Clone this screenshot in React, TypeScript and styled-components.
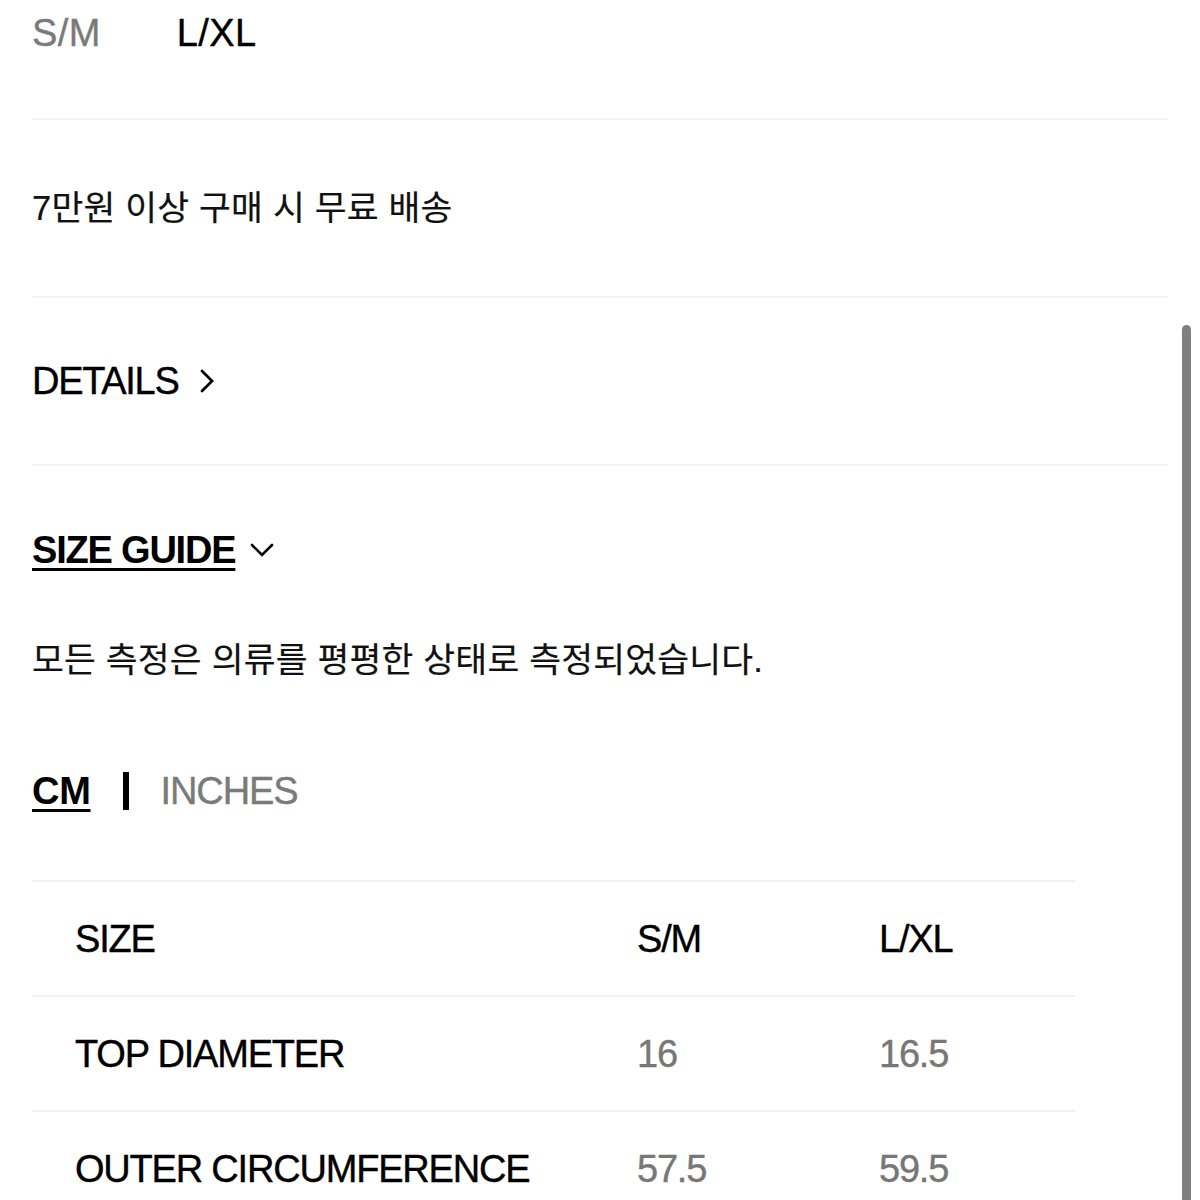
import React from "react";
import styled, { createGlobalStyle } from "styled-components";

const Global = createGlobalStyle`
  html, body { margin: 0; padding: 0; background: #fff; }
  body {
    font-family: "Liberation Sans", Arial, "Noto Sans CJK KR", sans-serif;
    color: #000;
    overflow: hidden;
  }
`;

const Page = styled.div`
  position: relative;
  width: 1200px;
  height: 1200px;
  overflow: hidden;
  background: #fff;
`;

const Content = styled.div`
  padding: 0 32px;
  display: flex;
  flex-direction: column;
`;

const Section = styled.section<{ $h: number }>`
  height: ${(p) => p.$h}px;
  border-bottom: 2px solid #f3f3f3;
  display: flex;
  align-items: center;
`;

const TopSection = styled.section`
  height: 118px;
  border-bottom: 2px solid #f3f3f3;
  display: flex;
  align-items: flex-start;
`;

const SizeOptions = styled.div`
  height: 65px;
  display: flex;
  align-items: center;
  gap: 76px;
`;

const SizeOption = styled.span<{ $active?: boolean }>`
  font-size: 38px;
  line-height: 40px;
  color: ${(p) => (p.$active ? "#000" : "#7a7a7a")};
  letter-spacing: 0.4px;
  -webkit-text-stroke: 0.4px ${(p) => (p.$active ? "#000" : "#7a7a7a")};
`;

const KoText = styled.p`
  margin: 0;
  font-family: "Liberation Sans", "Noto Sans CJK KR", sans-serif;
  font-size: 34.6px;
  line-height: 40px;
  color: #111;
  letter-spacing: 0.2px;
  -webkit-text-stroke: 0.2px #111;
`;

const Toggle = styled.div`
  display: flex;
  align-items: center;
  height: 40px;
`;

const Heading = styled.span<{ $bold?: boolean; $underline?: boolean }>`
  font-size: 38px;
  line-height: 40px;
  font-weight: ${(p) => (p.$bold ? 700 : 400)};
  letter-spacing: ${(p) => (p.$bold ? "-1.2px" : "-1.3px")};
  text-decoration: ${(p) => (p.$underline ? "underline" : "none")};
  text-decoration-thickness: 3px;
  text-underline-offset: 5px;
  -webkit-text-stroke: ${(p) => (p.$bold ? "0" : "0.4px")} #000;
`;

const GuideBlock = styled.div`
  display: flex;
  flex-direction: column;
  padding-top: 64px;
`;

const NoteRow = styled.div`
  margin-top: 70px;
  height: 40px;
  display: flex;
  align-items: center;
`;

const UnitRow = styled.div`
  margin-top: 91px;
  height: 40px;
  display: flex;
  align-items: center;
`;

const Unit = styled.span<{ $active?: boolean }>`
  font-size: 38px;
  line-height: 40px;
  font-weight: ${(p) => (p.$active ? 700 : 400)};
  color: ${(p) => (p.$active ? "#000" : "#7a7a7a")};
  letter-spacing: ${(p) => (p.$active ? "-0.3px" : "-1.1px")};
  text-decoration: ${(p) => (p.$active ? "underline" : "none")};
  text-decoration-thickness: 3px;
  text-underline-offset: 5px;
  -webkit-text-stroke: ${(p) => (p.$active ? "0" : "0.4px #7a7a7a")};
`;

const UnitBar = styled.span`
  display: inline-block;
  width: 6px;
  height: 38px;
  background: #000;
  margin: 0 32px 0 32px;
`;

const Table = styled.div`
  margin-top: 69px;
  width: 1043px;
  border-top: 2px solid #f1f1f1;
  display: flex;
  flex-direction: column;
`;

const Row = styled.div`
  height: 113px;
  display: grid;
  grid-template-columns: 562px 242px 1fr;
  align-items: center;
  border-bottom: 2px solid #f1f1f1;
  padding-left: 43px;
`;

const Cell = styled.span<{ $muted?: boolean }>`
  font-size: 38px;
  line-height: 40px;
  color: ${(p) => (p.$muted ? "#777" : "#000")};
  letter-spacing: -1.2px;
  white-space: nowrap;
  -webkit-text-stroke: 0.4px ${(p) => (p.$muted ? "#777" : "#000")};
`;

const Scrollbar = styled.div`
  position: absolute;
  right: 9px;
  top: 325px;
  width: 9px;
  height: 900px;
  border-radius: 5px;
  background: #808080;
`;

const ChevronRight = () => (
  <svg width="16" height="24" viewBox="0 0 16 24" style={{ marginLeft: 21 }}>
    <path d="M3 2 L13 12 L3 22" fill="none" stroke="#000" strokeWidth="2.8" strokeLinecap="round" strokeLinejoin="miter" />
  </svg>
);

const ChevronDown = () => (
  <svg width="24" height="16" viewBox="0 0 24 16" style={{ marginLeft: 15 }}>
    <path d="M2 3 L12 13 L22 3" fill="none" stroke="#000" strokeWidth="2.6" strokeLinecap="round" strokeLinejoin="miter" />
  </svg>
);

const rows = [
  { label: "TOP DIAMETER", a: "16", b: "16.5" },
  { label: "OUTER CIRCUMFERENCE", a: "57.5", b: "59.5" },
];

export default function App() {
  return (
    <Page>
      <Global />
      <Content>
        <TopSection>
          <SizeOptions>
            <SizeOption>S/M</SizeOption>
            <SizeOption $active>L/XL</SizeOption>
          </SizeOptions>
        </TopSection>
        <Section $h={176}>
          <KoText>7만원 이상 구매 시 무료 배송</KoText>
        </Section>
        <Section $h={166}>
          <Toggle>
            <Heading>DETAILS</Heading>
            <ChevronRight />
          </Toggle>
        </Section>
        <GuideBlock>
          <Toggle>
            <Heading $bold $underline>SIZE GUIDE</Heading>
            <ChevronDown />
          </Toggle>
          <NoteRow>
            <KoText>모든 측정은 의류를 평평한 상태로 측정되었습니다.</KoText>
          </NoteRow>
          <UnitRow>
            <Unit $active>CM</Unit>
            <UnitBar />
            <Unit>INCHES</Unit>
          </UnitRow>
          <Table>
            <Row>
              <Cell>SIZE</Cell>
              <Cell>S/M</Cell>
              <Cell>L/XL</Cell>
            </Row>
            {rows.map((r) => (
              <Row key={r.label}>
                <Cell>{r.label}</Cell>
                <Cell $muted>{r.a}</Cell>
                <Cell $muted>{r.b}</Cell>
              </Row>
            ))}
          </Table>
        </GuideBlock>
      </Content>
      <Scrollbar />
    </Page>
  );
}
